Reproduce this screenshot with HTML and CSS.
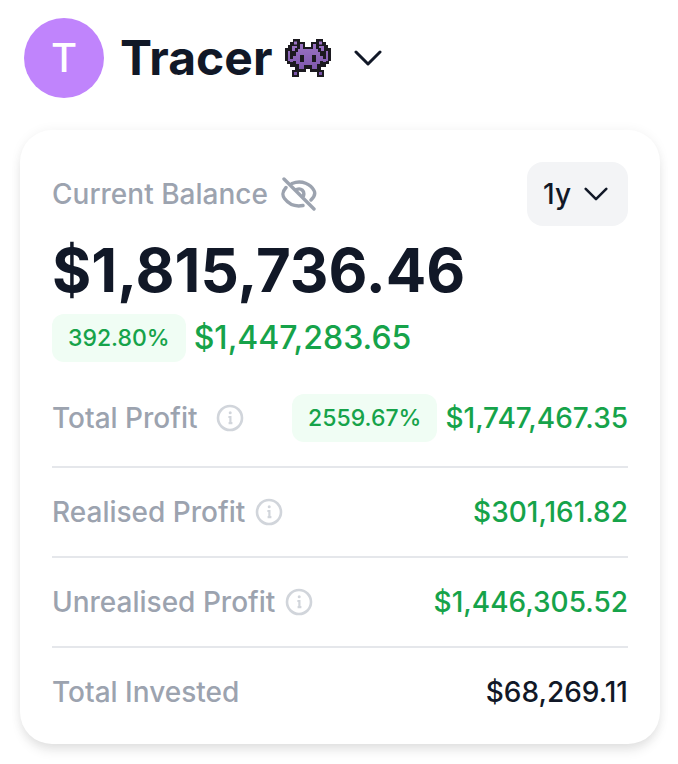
FILE: index.html
```html
<!DOCTYPE html>
<html lang="en">
<head>
<meta charset="utf-8">
<meta name="viewport" content="width=device-width, initial-scale=1">
<title>Tracer portfolio</title>
<link rel="stylesheet" href="styles.css">
</head>
<body>
<svg class="defs" aria-hidden="true">
  <symbol id="info" viewBox="0 0 28 28">
    <circle cx="14" cy="14" r="12" fill="none" stroke="currentColor" stroke-width="2.6"/>
    <circle cx="14.2" cy="8.8" r="1.5" fill="currentColor"/>
    <path d="M12.4 13H14.4V18.8M12.6 19.2H16.4" fill="none" stroke="currentColor" stroke-width="2.2"/>
  </symbol>
  <symbol id="chevron" viewBox="0 0 28 16">
    <path d="M2 2L14 14L26 2" fill="none" stroke="currentColor" stroke-width="3" stroke-linecap="round" stroke-linejoin="round"/>
  </symbol>
</svg>
<header class="header">
  <span class="avatar">T</span>
  <button class="account" type="button">
    <span class="name">Tracer</span>
    <svg class="monster" viewBox="0 0 46 38" role="img" aria-label="Alien monster">
      <defs>
        <linearGradient id="skin" x1="0" y1="0" x2="0" y2="38" gradientUnits="userSpaceOnUse">
          <stop offset="0" stop-color="#a078c8"/>
          <stop offset="1" stop-color="#7650a6"/>
        </linearGradient>
        <g id="half">
          <path fill="#1c1a20" d="M8 0H15V3H20V8H23V30H21V33H14V38H7V31H10V28H5V25H2V22H0V9H3V6H5V3H8z"/>
          <path fill="url(#skin)" d="M9 2.500H12V5.500H9zM7 7H12V9H10V12H7zM3 12H5V20H8V23H5V22H3zM15 5H18V10H23V26H19V30H14V25H11V22H8V17H11V13H13V10H15zM9 33H12V36H9z"/>
          <path fill="#1c1a20" d="M15 16H19V23H15z"/>
        </g>
      </defs>
      <use href="#half"/>
      <use href="#half" transform="translate(46 0) scale(-1 1)"/>
    </svg>
    <svg class="chevron" aria-hidden="true"><use href="#chevron"/></svg>
  </button>
</header>
<main class="card">
  <div class="top">
    <div class="label">
      <span>Current Balance</span>
      <button class="hide" type="button" aria-label="Hide balance">
        <svg viewBox="0 0 36 36" aria-hidden="true" fill="none" stroke="currentColor" stroke-width="3.4" stroke-linecap="round">
          <path d="M3 3L33 33M11 7.500C21 3.500 30 8.500 33 14.500C35 18 33 21 30 24M5 11.500C1 16 1 19 3.500 22.500C8 28.500 14 31 22 29.500M15.500 13.500C20 11.500 24 15 22.500 20"/>
        </svg>
      </button>
    </div>
    <button class="period" type="button">1y <svg class="chevron small" aria-hidden="true"><use href="#chevron"/></svg></button>
  </div>
  <div class="balance">$1,815,736.46</div>
  <div class="change"><span class="badge">392.80%</span><span class="gain">$1,447,283.65</span></div>
  <dl class="stats">
    <div class="row first">
      <dt>Total Profit <svg class="info spaced" aria-hidden="true"><use href="#info"/></svg></dt>
      <dd class="gain"><span class="badge">2559.67%</span>$1,747,467.35</dd>
    </div>
    <div class="row">
      <dt>Realised Profit <svg class="info" aria-hidden="true"><use href="#info"/></svg></dt>
      <dd class="gain">$301,161.82</dd>
    </div>
    <div class="row">
      <dt>Unrealised Profit <svg class="info" aria-hidden="true"><use href="#info"/></svg></dt>
      <dd class="gain">$1,446,305.52</dd>
    </div>
    <div class="row">
      <dt>Total Invested</dt>
      <dd>$68,269.11</dd>
    </div>
  </dl>
</main>
</body>
</html>
```
FILE: styles.css
```css
* { box-sizing: border-box; }
body {
  margin: 0;
  padding: 18px 18px 20px 20px;
  background: #fff;
  color: #111827;
  font-family: Inter, "Liberation Sans", sans-serif;
  font-size: 28px;
  line-height: 40px;
  font-weight: 500;
}
button {
  border: 0;
  padding: 0;
  background: none;
  color: inherit;
  font: inherit;
  cursor: pointer;
}
svg { display: block; flex: none; }
.defs { position: absolute; width: 0; height: 0; }
.header {
  display: flex;
  align-items: center;
  gap: 16px;
  padding-left: 4px;
  margin-bottom: 32px;
}
.avatar {
  display: flex;
  align-items: center;
  justify-content: center;
  width: 80px;
  height: 80px;
  border-radius: 50%;
  background: #c084fc;
  color: #fff;
  font-size: 40px;
}
.account { display: flex; align-items: center; }
.name { font-size: 48px; font-weight: 700; line-height: 64px; }
.monster { width: 46px; height: 38px; margin: 0 23px 0 13px; }
.chevron { width: 28px; height: 16px; }
.card {
  padding: 32px;
  border-radius: 32px;
  background: #fff;
  box-shadow: 0 8px 12px -2px rgba(0, 0, 0, 0.1), 0 0 12px rgba(0, 0, 0, 0.05);
}
.top, .label, .period, .change, .row, dt, dd { display: flex; align-items: center; }
.top { justify-content: space-between; }
.label { gap: 13px; color: #9ca3af; }
.hide svg { width: 36px; height: 36px; }
.period {
  gap: 13px;
  height: 64px;
  padding: 0 20px 0 16px;
  border-radius: 16px;
  background: #f3f4f6;
}
.small { width: 24px; height: 14px; }
.balance { font-size: 60px; font-weight: 700; line-height: 88px; }
.change { gap: 8px; font-size: 32px; }
.badge {
  padding: 4px 16px;
  border-radius: 12px;
  background: #f0fdf4;
  color: #16a34a;
  font-size: 23px;
}
.gain { color: #16a34a; }
.stats { margin: 32px 0 0; }
.row {
  justify-content: space-between;
  padding: 24px 0;
  border-bottom: 2px solid #e5e7eb;
}
.row.first { padding-top: 0; }
.row:last-child { padding-bottom: 0; border-bottom: 0; }
dt { gap: 10px; color: #9ca3af; }
dd { gap: 8px; margin: 0; }
.info { width: 28px; height: 28px; color: #d1d5db; }
.spaced { margin-left: 8px; }
```
